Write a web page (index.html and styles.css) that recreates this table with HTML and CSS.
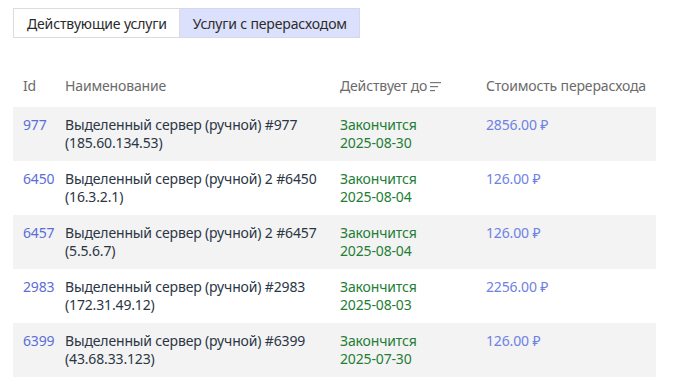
FILE: index.html
```html
<!DOCTYPE html>
<html lang="ru">
<head>
<meta charset="utf-8">
<link rel="stylesheet" href="styles.css">
</head>
<body>
<div class="page">
  <div class="tabs">
    <div class="tab">Действующие услуги</div>
    <div class="tab active">Услуги с перерасходом</div>
  </div>
  <table class="grid">
    <thead>
      <tr>
        <th class="c-id">Id</th>
        <th class="c-name">Наименование</th>
        <th class="c-date">Действует до<svg class="sort" width="12" height="10" viewBox="0 0 12 10"><rect x="0" y="0" width="11" height="1.2" fill="#777"/><rect x="0" y="4" width="8" height="1.2" fill="#777"/><rect x="0" y="8" width="5" height="1.2" fill="#777"/></svg></th>
        <th class="c-cost">Стоимость перерасхода</th>
      </tr>
    </thead>
    <tbody>
      <tr><td class="id">977</td><td class="name">Выделенный сервер (ручной) #977<br>(185.60.134.53)</td><td class="date">Закончится<br>2025-08-30</td><td class="cost">2856.00 ₽</td></tr>
      <tr><td class="id">6450</td><td class="name">Выделенный сервер (ручной) 2 #6450<br>(16.3.2.1)</td><td class="date">Закончится<br>2025-08-04</td><td class="cost">126.00 ₽</td></tr>
      <tr><td class="id">6457</td><td class="name">Выделенный сервер (ручной) 2 #6457<br>(5.5.6.7)</td><td class="date">Закончится<br>2025-08-04</td><td class="cost">126.00 ₽</td></tr>
      <tr><td class="id">2983</td><td class="name">Выделенный сервер (ручной) #2983<br>(172.31.49.12)</td><td class="date">Закончится<br>2025-08-03</td><td class="cost">2256.00 ₽</td></tr>
      <tr><td class="id">6399</td><td class="name">Выделенный сервер (ручной) #6399<br>(43.68.33.123)</td><td class="date">Закончится<br>2025-07-30</td><td class="cost">126.00 ₽</td></tr>
    </tbody>
  </table>
</div>
</body>
</html>
```

FILE: styles.css
```css
html, body { margin: 0; padding: 0; background: #fff; }
body { font-family: "Noto Sans", "Open Sans", sans-serif; font-size: 14px; letter-spacing: -0.15px; color: #2b3645; }
.page { padding: 8px 19px 0 13px; }
.tabs { display: flex; }
.tab { height: 30px; box-sizing: border-box; padding: 0 12px 0 13px; display: flex; align-items: center; border: 1px solid #dcdcdc; color: #2b2b2b; background: #fff; }
.tab.active { background: #dbe0fc; border-color: #d4d8ee; border-left: none; }
.grid { border-collapse: collapse; width: 643px; margin-top: 31px; }
th { font-weight: normal; color: #6b6b6b; text-align: left; padding: 8px 0 12px 10px; line-height: 18px; }
td { vertical-align: top; padding: 9px 0 9px 10px; line-height: 18px; }
tbody tr:nth-child(odd) { background: #f3f3f3; }
.c-id, .id { width: 32px; }
.c-name, .name { width: 265px; }
.c-date, .date { width: 136px; }
.id { color: #5b6ed8; }
.date { color: #237d35; }
.cost { color: #6e81e4; }
.sort { margin-left: 3px; vertical-align: -1px; }
```
